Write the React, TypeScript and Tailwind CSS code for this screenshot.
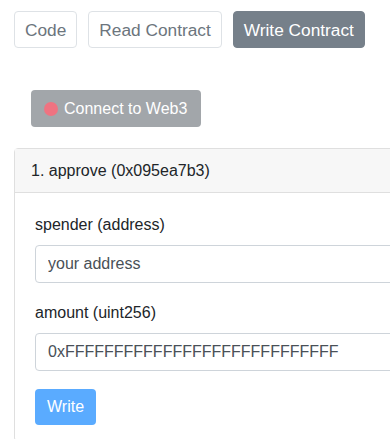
import React from 'react';

const font = { fontFamily: '"Liberation Sans", Arial, sans-serif' };

const TabButton = ({ label, active }: { label: string; active?: boolean }) => {
    if (active) {
        return (
            <button className="h-[37px] px-[10px] rounded border border-[#76808a] bg-[#76808a] text-white text-[17.3px] leading-6 whitespace-nowrap">
                {label}
            </button>
        );
    }
    return (
        <button className="h-[37px] px-[10px] rounded border border-[#dee2e6] bg-white text-[#6c757d] text-[17.3px] leading-6 whitespace-nowrap">
            {label}
        </button>
    );
};

const Field = ({ label, value }: { label: string; value: string }) => (
    <div className="flex flex-col">
        <label className="text-base leading-6 text-[#212529] mb-2">{label}</label>
        <input
            className="h-[38px] w-full px-3 rounded border border-[#ced4da] bg-white text-base text-[#495057] outline-none"
            defaultValue={value}
            style={font}
        />
    </div>
);

export default function App() {
    return (
        <div className="w-[390px] h-[439px] overflow-hidden bg-white" style={font}>
            <div className="flex gap-[11px] pl-[14px] pt-[11px]">
                <TabButton label="Code" />
                <TabButton label="Read Contract" />
                <TabButton label="Write Contract" active />
            </div>

            <div className="pl-[31px] mt-[42px]">
                <button className="h-[37px] w-[170px] pl-[13px] rounded bg-[#a2a6aa] text-white text-base leading-6 flex items-center gap-[6px] whitespace-nowrap">
                    <span className="w-[14px] h-[14px] shrink-0 rounded-full bg-[#ef7381]" />
                    Connect to Web3
                </button>
            </div>

            <div className="ml-[14px] mt-[21px] w-[420px] border border-[#dfdfdf] rounded-l">
                <div className="h-[44px] pl-4 flex items-center bg-[#f7f7f7] border-b border-[#dfdfdf] text-base text-[#212529]">
                    1. approve (0x095ea7b3)
                </div>
                <div className="px-5 pt-5 pb-4 flex flex-col">
                    <Field label="spender (address)" value="your address" />
                    <div className="mt-[18px]">
                        <Field label="amount (uint256)" value="0xFFFFFFFFFFFFFFFFFFFFFFFFFFFF" />
                    </div>
                    <div className="mt-[18px]">
                        <button className="h-[36px] px-3 rounded bg-[#5aabff] text-white text-base leading-6">
                            Write
                        </button>
                    </div>
                </div>
            </div>
        </div>
    );
}
